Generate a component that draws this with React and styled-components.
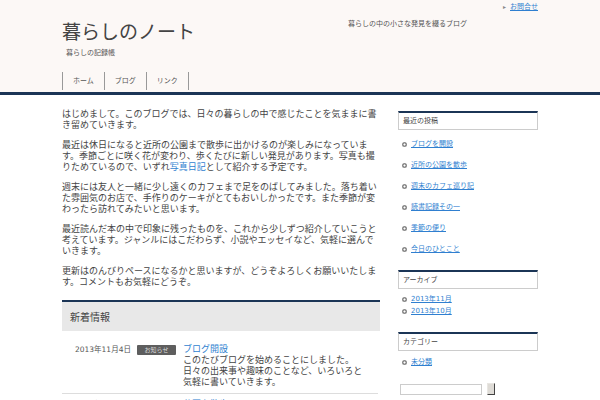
import React from "react";
import styled, { createGlobalStyle } from "styled-components";

const GlobalStyle = createGlobalStyle`
    html, body {
        margin: 0;
        padding: 0;
        background: #fff;
    }
    body {
        font-family: "DejaVu Sans", "Noto Sans CJK JP", sans-serif;
        color: #444;
    }
`;

const recent = ["ブログを開設", "近所の公園を散歩", "週末のカフェ巡り記", "読書記録その一", "季節の便り", "今日のひとこと"];

function App() {
    return (
        <>
            <GlobalStyle />
            <Header>
                <Container>
                    <TopBar>
                        <TopLink href="#">お問合せ</TopLink>
                    </TopBar>
                    <TitleRow>
                        <SiteTitle>暮らしのノート</SiteTitle>
                        <SiteDesc>暮らしの中の小さな発見を綴るブログ</SiteDesc>
                    </TitleRow>
                    <Tagline>暮らしの記録帳</Tagline>
                    <Nav>
                        <NavItem>ホーム</NavItem>
                        <NavItem>ブログ</NavItem>
                        <NavItem>リンク</NavItem>
                    </Nav>
                </Container>
            </Header>
            <Body>
                <Main>
                    <Paragraph>
                        はじめまして。このブログでは、日々の暮らしの中で感じたことを気ままに書き留めていきます。
                    </Paragraph>
                    <Paragraph>
                        最近は休日になると近所の公園まで散歩に出かけるのが楽しみになっています。季節ごとに咲く花が変わり、歩くたびに新しい発見があります。写真も撮りためているので、いずれ<TextLink href="#">写真日記</TextLink>として紹介する予定です。
                    </Paragraph>
                    <Paragraph>
                        週末には友人と一緒に少し遠くのカフェまで足をのばしてみました。落ち着いた雰囲気のお店で、手作りのケーキがとてもおいしかったです。また季節が変わったら訪れてみたいと思います。
                    </Paragraph>
                    <Paragraph>
                        最近読んだ本の中で印象に残ったものを、これから少しずつ紹介していこうと考えています。ジャンルにはこだわらず、小説やエッセイなど、気軽に選んでいきます。
                    </Paragraph>
                    <Paragraph>
                        更新はのんびりペースになるかと思いますが、どうぞよろしくお願いいたします。コメントもお気軽にどうぞ。
                    </Paragraph>

                    <NewsBox>
                        <NewsTitle>新着情報</NewsTitle>
                    </NewsBox>
                    <PostList>
                        <PostRow>
                            <PostDate>2013年11月4日</PostDate>
                            <PostTag>お知らせ</PostTag>
                            <PostBody>
                                <PostTitle href="#">ブログ開設</PostTitle>
                                <PostExcerpt>
                                    このたびブログを始めることにしました。日々の出来事や趣味のことなど、いろいろと気軽に書いていきます。
                                </PostExcerpt>
                            </PostBody>
                        </PostRow>
                        <PostRow>
                            <PostDate>2013年10月20日</PostDate>
                            <PostTag>日記</PostTag>
                            <PostBody>
                                <PostTitle href="#">公園を散歩</PostTitle>
                                <PostExcerpt>
                                    近所の公園まで散歩に出かけました。
                                </PostExcerpt>
                            </PostBody>
                        </PostRow>
                    </PostList>
                </Main>

                <Sidebar>
                    <Widget>
                        <WidgetTitle>最近の投稿</WidgetTitle>
                        <WidgetList gap={11} top={9}>
                            {recent.map((r) => (
                                <WidgetItem key={r}><a href="#">{r}</a></WidgetItem>
                            ))}
                        </WidgetList>
                    </Widget>
                    <Widget>
                        <WidgetTitle>アーカイブ</WidgetTitle>
                        <WidgetList gap={2} top={5}>
                            <WidgetItem><a href="#">2013年11月</a></WidgetItem>
                            <WidgetItem><a href="#">2013年10月</a></WidgetItem>
                        </WidgetList>
                    </Widget>
                    <Widget>
                        <WidgetTitle>カテゴリー</WidgetTitle>
                        <WidgetList gap={2} top={6}>
                            <WidgetItem><a href="#">未分類</a></WidgetItem>
                        </WidgetList>
                    </Widget>
                    <SearchForm>
                        <SearchInput type="text" />
                        <SearchButton type="button" />
                    </SearchForm>
                </Sidebar>
            </Body>
        </>
    );
}

const Container = styled.div`
    width: 476px;
    margin: 0 auto;
`
const Header = styled.header`
    background: #fcf8f6;
    height: 92px;
    border-bottom: 3px solid #1b3556;
`
const TopBar = styled.div`
    height: 14px;
    display: flex;
    justify-content: flex-end;
    align-items: center;
`
const TopLink = styled.a`
    font-size: 7px;
    line-height: 9px;
    color: #2f7fd0;
    &::before{
        content: "▸";
        color: #888;
        display: inline-block;
        margin-right: 4px;
        font-size: 6px;
    }
`
const TitleRow = styled.div`
    display: flex;
    justify-content: space-between;
    align-items: flex-start;
    margin-top: 6px;
`
const SiteTitle = styled.h1`
    margin: 0;
    font-size: 19px;
    line-height: 24px;
    font-weight: normal;
    color: #444;
`
const SiteDesc = styled.p`
    width: 190px;
    margin: 0;
    font-size: 7px;
    line-height: 8px;
    color: #555;
`
const Tagline = styled.p`
    margin: 4px 0 0 4px;
    font-size: 7px;
    line-height: 10px;
    color: #555;
`
const Nav = styled.nav`
    display: inline-flex;
    margin-top: 14px;
    border-right: 1px solid #999;
`
const NavItem = styled.a`
    height: 18px;
    line-height: 18px;
    padding: 0 10px;
    border-left: 1px solid #999;
    font-size: 7px;
    color: #555;
`
const Body = styled.div`
    width: 476px;
    margin: 0 auto;
    display: flex;
    gap: 18px;
    align-items: flex-start;
`
const Main = styled.main`
    width: 318px;
    padding-top: 14px;
`
const Paragraph = styled.p`
    margin: 0 0 9px;
    font-size: 9px;
    line-height: 11px;
    color: #444;
`
const TextLink = styled.a`
    color: #2f7fd0;
    text-decoration: none;
`
const NewsBox = styled.div`
    margin-top: 12px;
    background: #e8e8e8;
    border-top: 2px solid #1b3556;
    height: 29px;
    display: flex;
    align-items: center;
    padding: 0 8px;
`
const NewsTitle = styled.h2`
    margin: 0;
    font-size: 10px;
    font-weight: normal;
    color: #444;
`
const PostList = styled.div`
    padding-top: 8px;
    width: 316px;
`
const PostRow = styled.div`
    display: flex;
    align-items: flex-start;
    padding: 5px 0 5px 13px;
    border-bottom: 1px solid #ddd;
`
const PostDate = styled.span`
    width: 62px;
    flex-shrink: 0;
    font-size: 7.5px;
    line-height: 11px;
    color: #555;
`
const PostTag = styled.span`
    width: 39px;
    height: 10px;
    margin: 0.5px 7px 0 0;
    flex-shrink: 0;
    background: #5e5e5e;
    border-radius: 1px;
    color: #ddd;
    font-size: 6px;
    line-height: 10px;
    text-align: center;
`
const PostBody = styled.div`
    width: 184px;
    display: flex;
    flex-direction: column;
`
const PostTitle = styled.a`
    font-size: 9px;
    line-height: 11px;
    color: #2f7fd0;
    text-decoration: none;
`
const PostExcerpt = styled.p`
    margin: 0;
    font-size: 9px;
    line-height: 11px;
    color: #444;
`
const Sidebar = styled.aside`
    width: 140px;
    padding-top: 16px;
`
const Widget = styled.section`
    margin-bottom: 16px;
`
const WidgetTitle = styled.h3`
    margin: 0;
    height: 16px;
    line-height: 16px;
    padding: 0 4px;
    border: 1px solid #ccc;
    border-top: 2px solid #1b3556;
    font-size: 7px;
    font-weight: normal;
    color: #444;
`
const WidgetList = styled.ul`
    list-style: none;
    margin: 0;
    padding: ${(p) => p.top}px 0 0;
    display: flex;
    flex-direction: column;
    gap: ${(p) => p.gap}px;
`
const WidgetItem = styled.li`
    position: relative;
    padding-left: 13px;
    font-size: 7px;
    line-height: 10px;
    &::before{
        content: "";
        position: absolute;
        left: 4px;
        top: 2.5px;
        width: 5px;
        height: 5px;
        border-radius: 50%;
        background: radial-gradient(circle, #fff 0 0.8px, #888 1.2px);
    }
    a{
        color: #2f7fd0;
    }
`
const SearchForm = styled.form`
    display: flex;
    align-items: center;
    gap: 5px;
    padding-left: 2px;
`
const SearchInput = styled.input`
    box-sizing: border-box;
    width: 82px;
    height: 11px;
    border: 1px solid #ccc;
    padding: 0;
    background: #fff;
`
const SearchButton = styled.button`
    box-sizing: border-box;
    width: 8px;
    height: 12px;
    padding: 0;
    background: #dedbd6;
    border: 1px solid #e8e6e2;
    border-right-color: #444;
    border-bottom-color: #444;
`

export default App;
